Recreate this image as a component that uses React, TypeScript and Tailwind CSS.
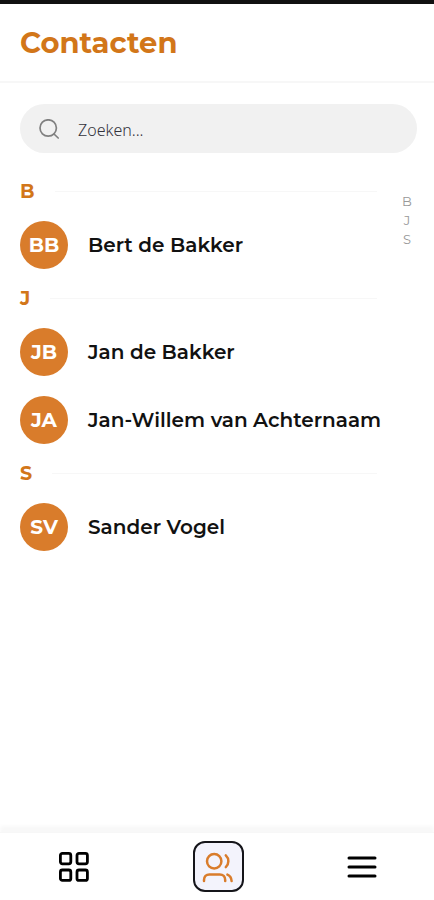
type Contact = {
  name: string
  initials: string
}

const groups: { letter: string; contacts: Contact[] }[] = [
  { letter: "B", contacts: [{ name: "Bert de Bakker", initials: "BB" }] },
  {
    letter: "J",
    contacts: [
      { name: "Jan de Bakker", initials: "JB" },
      { name: "Jan-Willem van Achternaam", initials: "JA" },
    ],
  },
  { letter: "S", contacts: [{ name: "Sander Vogel", initials: "SV" }] },
]

function SearchIcon() {
  return (
    <svg className="size-5 shrink-0" viewBox="0 0 20 20" fill="none" stroke="#808080" strokeWidth="1.7" strokeLinecap="round" aria-hidden="true">
      <circle cx="9.2" cy="9" r="8.2" />
      <path d="M15 15l4.2 4" />
    </svg>
  )
}

function GridIcon() {
  return (
    <svg className="size-8" viewBox="0 0 32 32" fill="none" stroke="currentColor" strokeWidth="2.8" aria-hidden="true">
      <rect x="2.4" y="2.4" width="10.4" height="10.4" rx="2" />
      <rect x="19" y="2.4" width="10.4" height="10.4" rx="2" />
      <rect x="2.4" y="19" width="10.4" height="10.4" rx="2" />
      <rect x="19" y="19" width="10.4" height="10.4" rx="2" />
    </svg>
  )
}

function UsersIcon() {
  return (
    <svg className="size-8" viewBox="0 0 32 32" fill="none" stroke="currentColor" strokeWidth="2.5" strokeLinecap="round" aria-hidden="true">
      <circle cx="12.2" cy="10.2" r="7.2" />
      <path d="M23.8 4.4c3.4 3.2 3.4 8.6 0 11.8" />
      <path d="M2 30v-1c0-3.4 2.2-5.6 5.4-5.6h10.4c3.2 0 5.4 2.2 5.4 5.6v1" />
      <path d="M25.4 23.6c2.6 1 4 3.2 4.2 6.4" />
    </svg>
  )
}

function MenuIcon() {
  return (
    <svg className="size-8" viewBox="0 0 32 32" fill="none" stroke="currentColor" strokeWidth="3" strokeLinecap="round" aria-hidden="true">
      <path d="M3 7h26M3 16h26M3 25h26" />
    </svg>
  )
}

export default function App() {
  return (
    <div className="flex min-h-screen flex-col border-t-4 border-[#111111] bg-white font-['Montserrat','Inter',sans-serif] text-[#111111]">
      <header className="border-b-2 border-[#f7f7f7] px-5 pt-[21px] pb-5">
        <h1 className="text-[29px] leading-9 font-bold text-[#d27619]">Contacten</h1>
      </header>

      <main className="flex-1 pt-[21px] pr-[17px] pl-5">
        <label className="flex h-[49px] items-center gap-[19px] rounded-full bg-[#f1f1f1] px-[19px]">
          <SearchIcon />
          <input
            type="search"
            aria-label="Zoeken"
            placeholder="Zoeken..."
            className="min-w-0 flex-1 bg-transparent pt-[2px] font-['Noto_Sans',sans-serif] text-base font-light text-[#333333] outline-none placeholder:text-[#33333c]"
          />
        </label>

        <div className="mt-[19px] flex gap-5">
          <div className="min-w-0 flex-1">
            {groups.map((group) => (
              <section key={group.letter}>
                <div className="flex items-center gap-5">
                  <h2 className="text-[19px] leading-[39px] font-bold text-[#d27619]">{group.letter}</h2>
                  <div className="h-px flex-1 bg-[#f7f7f7]" />
                </div>
                <ul>
                  {group.contacts.map((contact) => (
                    <li key={contact.name}>
                      <a href="#" className="flex items-center gap-5 py-[10px]">
                        <span className="flex size-12 shrink-0 items-center justify-center rounded-full bg-[#d97c2b] text-xl font-bold text-white">
                          {contact.initials}
                        </span>
                        <span className="text-xl font-semibold whitespace-nowrap">{contact.name}</span>
                      </a>
                    </li>
                  ))}
                </ul>
              </section>
            ))}
          </div>

          <nav aria-label="Index" className="flex w-5 flex-col items-center pt-5 text-[13px] leading-[19px] text-[#999999]">
            {groups.map((group) => (
              <a key={group.letter} href="#">
                {group.letter}
              </a>
            ))}
          </nav>
        </div>
      </main>

      <nav aria-label="Menu" className="border-t border-[#f7f7f7] shadow-[0_-6px_4px_#f8f8f8]">
        <div className="grid grid-cols-3 place-items-center py-2 pl-[2px]">
          <button aria-label="Overzicht" className="flex size-[51px] items-center justify-center text-black">
            <GridIcon />
          </button>
          <button aria-label="Contacten" className="flex size-[51px] items-center justify-center rounded-xl border-2 border-[#15151a] bg-[#f3f3fc] text-[#d97c2b]">
            <UsersIcon />
          </button>
          <button aria-label="Menu" className="flex size-[51px] items-center justify-center text-black">
            <MenuIcon />
          </button>
        </div>
      </nav>
    </div>
  )
}
